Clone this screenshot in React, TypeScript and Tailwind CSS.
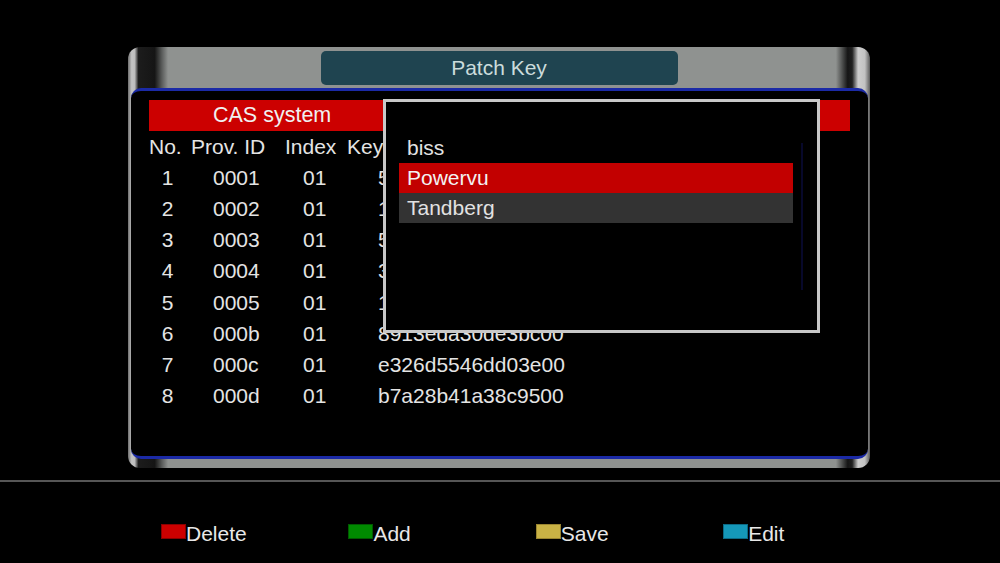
import React from "react";

const rows = [
  { no: "1", prov: "0001", idx: "01", key: "5a1c0e77d2b94f00" },
  { no: "2", prov: "0002", idx: "01", key: "1b3e58c0a4d72600" },
  { no: "3", prov: "0003", idx: "01", key: "5d20ab6e93c14800" },
  { no: "4", prov: "0004", idx: "01", key: "3f81d5c27e0a9b00" },
  { no: "5", prov: "0005", idx: "01", key: "1c6a47e0b35d2f00" },
  { no: "6", prov: "000b", idx: "01", key: "8913eda30de3bc00" },
  { no: "7", prov: "000c", idx: "01", key: "e326d5546dd03e00" },
  { no: "8", prov: "000d", idx: "01", key: "b7a28b41a38c9500" },
];

const buttons = [
  { label: "Delete", box: "bg-[#cc0000] border-[#8a0000]" },
  { label: "Add", box: "bg-[#008a00] border-[#005a00]" },
  { label: "Save", box: "bg-[#c9b245] border-[#9a8530]" },
  { label: "Edit", box: "bg-[#1598b9] border-[#0c6a85]" },
];

export default function App() {
  return (
    <div className="w-[1000px] h-[563px] bg-black overflow-hidden flex flex-col font-['Liberation_Sans',Arial,sans-serif] text-[#e4e4e4]">
      {/* main frame */}
      <div className="pt-[47px] pl-[128px]">
        <div className="w-[742px] h-[421px] flex flex-col rounded-[12px] bg-[linear-gradient(to_right,#6e6e6e_0%,#c4c4c4_0.5%,#bdbdbd_0.9%,#1c1c1c_1.4%,#151515_3.6%,#5c5e5d_4.6%,#8f9290_5.4%,#8f9290_95.4%,#151515_97%,#202020_97.6%,#cdcdcd_98.4%,#c2c2c2_99.3%,#5a5a5a_100%)]">
          <div className="h-[41px] flex justify-center pt-[4px]">
            <div className="w-[357px] h-[34px] rounded-[5px] bg-[#1f4450] flex items-center justify-center text-[21px] text-[#cbdcdc]">
              Patch Key
            </div>
          </div>

          <div className="relative h-[371px] ml-[3px] mr-[2px] bg-black rounded-[10px] border-y-[3px] border-[#1b2aa6] pt-[9px] px-[18px]">
            <div className="h-[31px] bg-[#cc0000] flex items-center pl-[64px] text-[21.5px] text-[#f0f0f0]">
              CAS system
            </div>

            <div className="h-[31px] flex items-center text-[21px]">
              <span className="w-[42px]">No.</span>
              <span className="w-[94px]">Prov. ID</span>
              <span className="w-[62px]">Index</span>
              <span>Key</span>
            </div>

            {rows.map((r) => (
              <div key={r.no} className="h-[31.2px] flex items-center text-[21px]">
                <span className="w-[37px] text-center">{r.no}</span>
                <span className="w-[117px] pl-[27px]">{r.prov}</span>
                <span className="w-[75px]">{r.idx}</span>
                <span>{r.key}</span>
              </div>
            ))}

            {/* popup list */}
            <div className="absolute left-[252px] top-[8px] w-[437px] h-[234px] border-[3px] border-[#c8c8c8] bg-black pt-[30px] pl-[13px] flex gap-[8px]">
              <div className="w-[394px] flex flex-col text-[21px] text-[#e2e2e2]">
                <div className="h-[31px] flex items-center pl-[8px]">biss</div>
                <div className="h-[30px] flex items-center pl-[8px] bg-[#c20000] text-[#f2f2f2]">Powervu</div>
                <div className="h-[30px] flex items-center pl-[8px] bg-[#333333]">Tandberg</div>
              </div>
              <div className="w-[2px] h-[147px] mt-[11px] bg-[#07082a]" />
            </div>
          </div>

          <div className="flex-1" />
        </div>
      </div>

      <div className="mt-[12px] h-[2px] bg-[#565656]" />

      <div className="flex pl-[161px] pt-[40px]">
        {buttons.map((b) => (
          <div key={b.label} className="w-[187.4px] flex items-start">
            <span className={`w-[25px] h-[15px] mt-[2px] border ${b.box}`} />
            <span className="text-[21px] leading-[24px] text-[#e8e8e8]">{b.label}</span>
          </div>
        ))}
      </div>
    </div>
  );
}
